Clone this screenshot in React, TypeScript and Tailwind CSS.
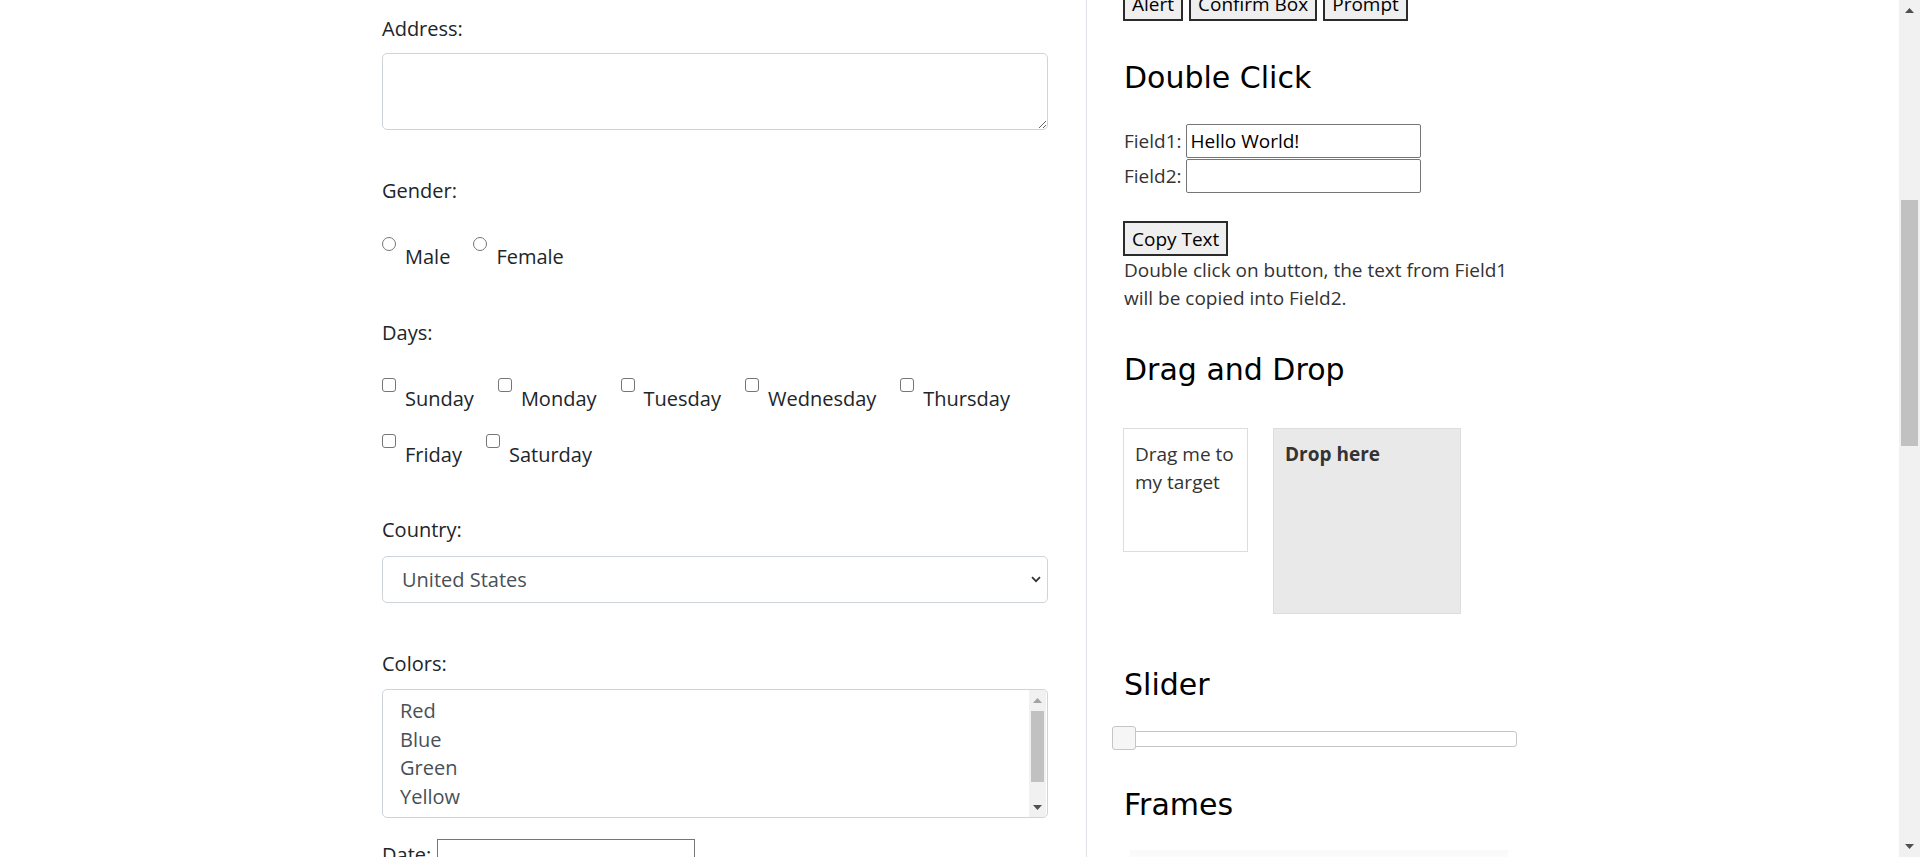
import React from "react";

const days1 = ["Sunday", "Monday", "Tuesday", "Wednesday", "Thursday", "Friday", "Saturday"];
const colors = ["Red", "Blue", "Green", "Yellow", "White"];

function Arrow({ up, color }: { up?: boolean; color: string }) {
  return (
    <svg width="9" height="5" viewBox="0 0 9 5">
      <path d={up ? "M0 5 L4.5 0 L9 5Z" : "M0 0 L4.5 5 L9 0Z"} fill={color} />
    </svg>
  );
}

function Option({ label, round }: { label: string; round?: boolean }) {
  return (
    <label className="flex items-start">
      <span
        className={`h-[14px] w-[14px] shrink-0 border border-[#767676] bg-white ${round ? "rounded-full" : "rounded-[3px]"}`}
      />
      <span className={`ml-[9px] leading-[30px] ${round ? "mt-[5px]" : "mt-[6px]"}`}>{label}</span>
    </label>
  );
}

function Label({ children, mt }: { children: React.ReactNode; mt: string }) {
  return <div className={`${mt} leading-[30px]`}>{children}</div>;
}

function Heading({ children, mt }: { children: React.ReactNode; mt: string }) {
  return (
    <h2 className={`${mt} font-['DejaVu_Sans',sans-serif] text-[30px] leading-[36px] font-normal text-black`}>
      {children}
    </h2>
  );
}

function Btn({ children }: { children: React.ReactNode }) {
  return (
    <button className="flex h-[35px] items-center border-2 border-[#2b2b2b] bg-[#efefef] px-[7px] text-[19px] leading-[28px] text-black">
      {children}
    </button>
  );
}

function LeftColumn() {
  return (
    <div className="ml-[382px] flex w-[666px] shrink-0 flex-col text-[20px] text-[#212529] *:shrink-0">
      {/* Address */}
      <Label mt="mt-[14px]">Address:</Label>
      <textarea className="mt-[9px] block h-[77px] w-full rounded-[5px] border border-[#ced4da] bg-white" />

      {/* Gender */}
      <Label mt="mt-[46px]">Gender:</Label>
      <div className="mt-[31px] flex gap-x-[23px]">
        <Option label="Male" round />
        <Option label="Female" round />
      </div>

      {/* Days */}
      <Label mt="mt-[46px]">Days:</Label>
      <div className="mt-[30px] flex flex-wrap gap-x-[24px] gap-y-[20px]">
        {days1.map(d => (
          <Option key={d} label={d} />
        ))}
      </div>

      {/* Country */}
      <Label mt="mt-[45px]">Country:</Label>
      <div className="mt-[11px] flex h-[47px] w-full items-center justify-between rounded-[5px] border border-[#ced4da] bg-white pl-[19px] pr-[6px] text-[#495057]">
        <span className="leading-[30px]">United States</span>
        <svg width="10" height="7" viewBox="0 0 10 7">
          <path d="M1 1.2 L5 5.2 L9 1.2" fill="none" stroke="#333" strokeWidth="1.7" />
        </svg>
      </div>

      {/* Colors */}
      <Label mt="mt-[46px]">Colors:</Label>
      <div className="mt-[10px] flex h-[129px] w-full overflow-hidden rounded-[5px] border border-[#ced4da] bg-white">
        <div className="flex-1 overflow-hidden pl-[17px] pt-[7px] leading-[28.5px] text-[#495057]">
          {colors.map(c => (
            <div key={c}>{c}</div>
          ))}
        </div>
        <div className="mr-[1px] flex w-[17px] flex-col bg-[#f1f1f1]">
          <div className="flex h-[20px] items-center justify-center">
            <Arrow up color="#a3a3a3" />
          </div>
          <div className="mx-[2px] mt-[1px] h-[71px] bg-[#c1c1c1]" />
          <div className="flex-1" />
          <div className="flex h-[20px] items-center justify-center">
            <Arrow color="#505050" />
          </div>
        </div>
      </div>

      {/* Date */}
      <div className="mt-[21px] flex items-start gap-[6px]">
        <span className="mt-[1px] leading-[30px]">Date:</span>
        <div className="h-[34px] w-[258px] border border-[#767676] bg-white" />
      </div>
    </div>
  );
}

function RightColumn() {
  return (
    <div className="ml-[38px] flex w-[431px] shrink-0 flex-col border-l border-[#dee2e6] pl-[37px] text-[19px] text-[#333] *:shrink-0">
      <div className="-ml-[1px] mt-[-14px] flex gap-[6px]">
        <Btn>Alert</Btn>
        <Btn>Confirm Box</Btn>
        <Btn>Prompt</Btn>
      </div>

      <Heading mt="mt-[39px]">Double Click</Heading>
      <div className="mt-[28px] flex items-center gap-[4px]">
        <span className="leading-[28px]">Field1:</span>
        <input
          defaultValue="Hello World!"
          className="h-[34px] w-[235px] rounded-[2px] border border-[#767676] bg-white px-[4px] text-[19px] text-black"
        />
      </div>
      <div className="mt-[1px] flex items-center gap-[4px]">
        <span className="leading-[28px]">Field2:</span>
        <input className="h-[34px] w-[235px] rounded-[2px] border border-[#767676] bg-white px-[4px] text-[19px] text-black" />
      </div>
      <div className="-ml-[1px] mt-[28px] flex">
        <Btn>Copy Text</Btn>
      </div>
      <p className="w-[393px] leading-[28px]">
        Double click on button, the text from Field1 will be copied into Field2.
      </p>

      <Heading mt="mt-[40px]">Drag and Drop</Heading>
      <div className="-ml-[1px] mt-[40px] flex items-start gap-[25px]">
        <div className="h-[124px] w-[125px] border border-[#dddddd] bg-white p-[11px] leading-[28px]">
          Drag me to my target
        </div>
        <div className="h-[186px] w-[188px] border border-[#dddddd] bg-[#e9e9e9] p-[11px] font-bold leading-[28px]">
          Drop here
        </div>
      </div>

      <Heading mt="mt-[53px]">Slider</Heading>
      <div className="relative mt-[28px] h-[16px] w-[393px] rounded-[3px] border border-[#c5c5c5] bg-white">
        <span className="absolute left-[-13px] top-[-6px] h-[24px] w-[24px] rounded-[3px] border border-[#c5c5c5] bg-[#f6f6f6]" />
      </div>

      <Heading mt="mt-[40px]">Frames</Heading>
      <div className="ml-[6px] mt-[27px] h-[20px] w-[378px] bg-gradient-to-b from-[#f9f9f9] to-white" />
    </div>
  );
}

function PageScrollbar() {
  return (
    <div className="flex w-[21px] shrink-0 flex-col bg-[#f1f1f1]">
      <div className="flex h-[21px] items-center justify-center">
        <Arrow up color="#505050" />
      </div>
      <div className="h-[179px]" />
      <div className="mx-[2px] h-[246px] bg-[#c1c1c1]" />
      <div className="flex-1" />
      <div className="flex h-[21px] items-center justify-center">
        <Arrow color="#505050" />
      </div>
    </div>
  );
}

export default function App() {
  return (
    <div className="flex h-[857px] w-[1920px] overflow-hidden bg-white font-['Open_Sans',sans-serif]">
      <div className="flex h-full flex-1 overflow-hidden">
        <LeftColumn />
        <RightColumn />
      </div>
      <PageScrollbar />
    </div>
  );
}
